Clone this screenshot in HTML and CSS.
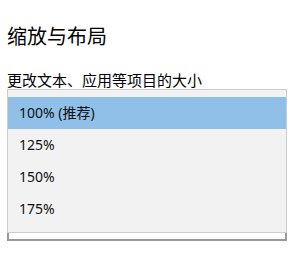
FILE: index.html
```html
<!DOCTYPE html>
<html lang="zh-CN">
<head>
  <meta charset="UTF-8" />
  <title>缩放与布局</title>
  <link rel="stylesheet" href="styles.css">
</head>
<body>
  <div class="page">
    <h1 class="title">缩放与布局</h1>
    <div class="label">更改文本、应用等项目的大小</div>
    <div class="dropdown">
      <div class="combo"></div>
      <ul class="popup">
        <li class="option selected">100% (推荐)</li>
        <li class="option">125%</li>
        <li class="option">150%</li>
        <li class="option">175%</li>
      </ul>
    </div>
  </div>
</body>
</html>
```

FILE: styles.css
```css
body {
  margin: 0;
  background: #fff;
  font-family: "Noto Sans", "Noto Sans CJK SC", sans-serif;
  color: #000;
}
.page {
  padding: 23px 7px 0;
}
.title {
  margin: 0;
  font-size: 20px;
  font-weight: 400;
  line-height: 28px;
}
.label {
  margin-top: 20px;
  font-size: 15px;
  line-height: 18px;
}
.dropdown {
  position: relative;
  width: 280px;
  padding-top: 120px;
}
.combo {
  height: 28px;
  border: 2px solid #999;
  background: #fff;
}
.popup {
  position: absolute;
  top: 0;
  left: 0;
  right: 0;
  margin: 0;
  padding: 7px 0;
  list-style: none;
  background: #f2f2f2;
  border: 1px solid #ccc;
}
.option {
  height: 32px;
  line-height: 32px;
  padding-left: 11px;
  font-size: 14px;
  color: #111;
}
.option.selected {
  background: #90c0e8;
}
```
